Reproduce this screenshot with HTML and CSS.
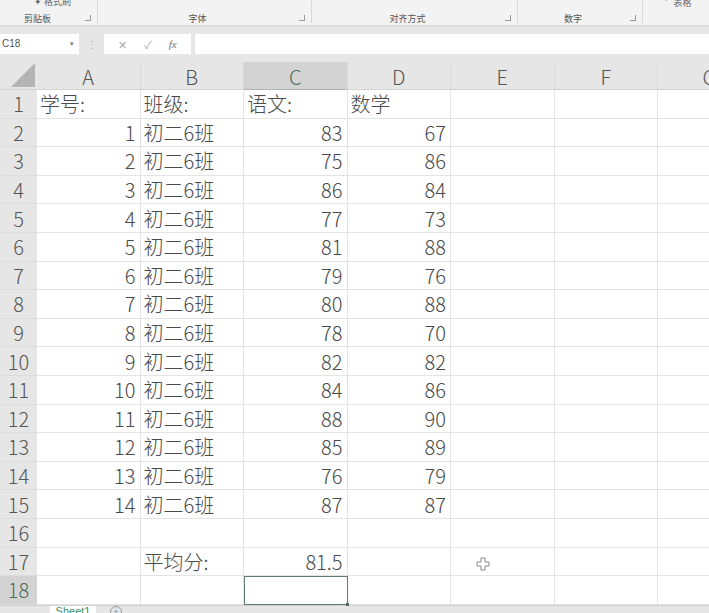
FILE: index.html
```html
<!DOCTYPE html>
<html lang="zh">
  <head>
    <meta charset="UTF-8" />
    <title>成绩表</title>
    <link rel="stylesheet" href="styles.css">
  </head>
  <body>
    <div class="ribbon">
      <div class="group g-clip"><span class="clip-btn">&#10022; 格式刷</span><span class="label">剪贴板</span><span class="launch"></span></div>
      <div class="group g-font"><span class="label">字体</span><span class="launch"></span></div>
      <div class="group g-align"><span class="label">对齐方式</span><span class="launch"></span></div>
      <div class="group g-num"><span class="label">数字</span><span class="launch"></span></div>
      <div class="group g-rest"><span class="rest-txt">&#709; &nbsp; 表格</span></div>
    </div>

    <div class="formula-bar">
      <div class="name-box">C18<span class="arrow">&#9662;</span></div>
      <div class="dots">&#8942;</div>
      <div class="fx-box"><span>&#10005;</span><span>&#10003;</span><span class="fx">fx</span></div>
      <div class="input"></div>
    </div>

    <div class="sheet" id="sheet"></div>

    <div class="tabs">
      <div class="tab">Sheet1</div>
      <div class="add">+</div>
    </div>

    <svg class="cursor" width="14" height="14" viewBox="0 0 14 14">
      <path d="M5 1h4v4h4v4h-4v4h-4v-4h-4v-4h4z" fill="#fff" stroke="#888" stroke-width="1"/>
    </svg>

    <script>
      var cols = ["A", "B", "C", "D", "E", "F", "G"];
      var data = [
        ["学号:", "班级:", "语文:", "数学"],
        [1, "初二6班", 83, 67],
        [2, "初二6班", 75, 86],
        [3, "初二6班", 86, 84],
        [4, "初二6班", 77, 73],
        [5, "初二6班", 81, 88],
        [6, "初二6班", 79, 76],
        [7, "初二6班", 80, 88],
        [8, "初二6班", 78, 70],
        [9, "初二6班", 82, 82],
        [10, "初二6班", 84, 86],
        [11, "初二6班", 88, 90],
        [12, "初二6班", 85, 89],
        [13, "初二6班", 76, 79],
        [14, "初二6班", 87, 87],
        [],
        ["", "平均分:", 81.5],
        []
      ];

      var sheet = document.getElementById("sheet");
      var html = '<div class="corner"><span class="tri"></span></div>';
      cols.forEach(function (c) {
        html += '<div class="col-head' + (c === "C" ? " sel" : "") + '">' + c + '</div>';
      });
      data.forEach(function (row, r) {
        var n = r + 1;
        html += '<div class="row-head' + (n === 18 ? " sel" : "") + '">' + n + '</div>';
        cols.forEach(function (c, i) {
          var v = row[i];
          var cls = "cell";
          if (typeof v === "number") cls += " num";
          if (v === undefined) v = "";
          if (n === 18 && c === "C") cls += " active";
          html += '<div class="' + cls + '">' + v + '</div>';
        });
      });
      sheet.innerHTML = html;
    </script>
  </body>
</html>
```

FILE: styles.css
```css
* {
  margin: 0;
  padding: 0;
  box-sizing: border-box;
}

body {
  width: 709px;
  height: 613px;
  overflow: hidden;
  font-family: "Noto Sans CJK SC", "Noto Sans", sans-serif;
  background-color: #e6e6e6;
  color: #4a4a4a;
  position: relative;
}

/* ribbon */
.ribbon {
  height: 26px;
  display: flex;
  background-color: #f3f3f3;
  border-bottom: 1px solid #dadada;
}

.group {
  position: relative;
  border-right: 1px solid #d8d8d8;
  margin: 0 0 2px;
  font-size: 9px;
  color: #555;
}

.g-clip { width: 98px; }
.g-font { width: 214px; }
.g-align { width: 206px; }
.g-num { width: 125px; }
.g-rest { flex: 1; border-right: none; }

.label {
  position: absolute;
  top: 12px;
  left: 0;
  right: 0;
  text-align: center;
  padding-right: 14px;
}

.g-clip .label { padding-right: 22px; }

.launch {
  position: absolute;
  right: 6px;
  top: 15px;
  width: 6px;
  height: 6px;
  border-right: 1px solid #999;
  border-bottom: 1px solid #999;
}

.clip-btn {
  position: absolute;
  top: -5px;
  left: 34px;
  font-size: 9px;
  color: #666;
}

.rest-txt {
  position: absolute;
  top: -4px;
  left: 22px;
  font-size: 9px;
  color: #666;
}

/* formula bar */
.formula-bar {
  height: 36px;
  display: flex;
  align-items: center;
  padding: 7px 0 8px;
}

.name-box {
  width: 79px;
  height: 20px;
  background: #fff;
  font-family: "Liberation Sans", sans-serif;
  font-size: 10px;
  line-height: 20px;
  padding-left: 2px;
  color: #555;
  position: relative;
}

.arrow {
  position: absolute;
  right: 5px;
  font-size: 7px;
  color: #777;
}

.dots {
  width: 25px;
  text-align: center;
  font-size: 10px;
  color: #aaa;
}

.fx-box {
  width: 87px;
  height: 20px;
  background: #fff;
  display: flex;
  align-items: center;
  justify-content: space-around;
  padding: 0 6px;
  font-size: 11px;
  color: #aaa;
}

.fx {
  font-family: "Liberation Serif", serif;
  font-style: italic;
  color: #777;
}

.input {
  flex: 1;
  height: 20px;
  margin-left: 4px;
  background: #fff;
}

/* grid */
.sheet {
  display: grid;
  grid-template-columns: 37px repeat(7, 103.5px);
  grid-template-rows: 28px repeat(18, 28.6px);
  background-color: #fff;
  font-size: 20px;
  font-weight: 300;
  line-height: 1;
}

.corner,
.col-head,
.row-head {
  background-color: #e6e6e6;
  color: #555;
  display: flex;
  align-items: center;
  justify-content: center;
}

.corner {
  position: relative;
  border-bottom: 1px solid #d4d4d4;
}

.tri {
  position: absolute;
  right: 2px;
  bottom: 2px;
  width: 0;
  height: 0;
  border-left: 24px solid transparent;
  border-bottom: 24px solid #b4b4b4;
}

.col-head {
  border-right: 1px solid #d9d9d9;
  border-bottom: 1px solid #d4d4d4;
  padding-top: 2px;
}

.row-head {
  border-bottom: 1px solid #dcdcdc;
  padding-top: 1px;
}

.col-head.sel,
.row-head.sel {
  background-color: #d3d3d3;
  color: #4b6f5a;
}

.col-head.sel {
  border-bottom: 1px solid #a8b8ad;
}

.cell {
  border-right: 1px solid #e4e4e4;
  border-bottom: 1px solid #e4e4e4;
  display: flex;
  align-items: center;
  padding: 1px 3px 0;
  white-space: nowrap;
  overflow: visible;
}

.cell.num {
  justify-content: flex-end;
  padding-right: 4px;
}

.cell.active {
  border: 1px solid #5d7f6a;
  position: relative;
}

.cell.active::after {
  content: "";
  position: absolute;
  right: -2px;
  bottom: -2px;
  width: 3px;
  height: 3px;
  background: #4d6f5a;
}

/* sheet tabs */
.tabs {
  height: 8px;
  display: flex;
  background-color: #e6e6e6;
  border-top: 1px solid #d0d0d0;
  overflow: hidden;
}

.tab {
  margin-left: 50px;
  width: 46px;
  background: #fff;
  color: #3f8f5a;
  font-family: "Liberation Sans", sans-serif;
  font-size: 11px;
  text-align: center;
  line-height: 11px;
}

.add {
  margin-left: 14px;
  width: 12px;
  height: 12px;
  border: 1px solid #999;
  border-radius: 50%;
  font-size: 9px;
  line-height: 10px;
  text-align: center;
  color: #888;
}

.cursor {
  position: absolute;
  left: 476px;
  top: 557px;
}
```
